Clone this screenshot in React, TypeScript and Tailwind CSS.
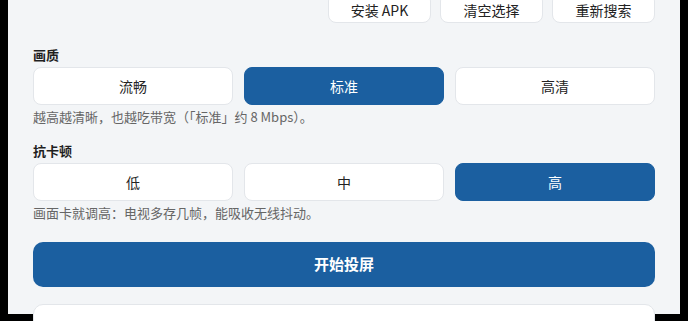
import React, { useState } from "react";

const font = { fontFamily: '"Noto Sans CJK SC", "Noto Sans", sans-serif' };

const Segmented = ({
  options,
  value,
  onChange,
}: {
  options: string[];
  value: string;
  onChange: (v: string) => void;
}) => (
  <div className="grid grid-cols-3 gap-[11px]">
    {options.map((o) => (
      <button
        key={o}
        onClick={() => onChange(o)}
        className={`h-[38px] rounded-[8px] text-[14px] ${
          value === o
            ? "bg-[#1b5fa0] text-white border border-[#1b5fa0]"
            : "bg-white text-[#222] border border-[#e3e6ea]"
        }`}
      >
        {o}
      </button>
    ))}
  </div>
);

export default function App() {
  const [quality, setQuality] = useState("标准");
  const [buffer, setBuffer] = useState("高");

  return (
    <div className="h-[321px] overflow-hidden bg-black px-2" style={font}>
      <div className="h-full bg-[#f3f5f7] px-[25px]">
        {/* 顶部操作 */}
        <div className="-mt-[7px] flex justify-end gap-[9px]">
          {["安装 APK", "清空选择", "重新搜索"].map((t) => (
            <button
              key={t}
              className="flex h-[30px] w-[103px] items-center justify-center rounded-[8px] border border-[#e3e6ea] bg-white pt-[3px] text-[14px] leading-[14px] text-[#222]"
            >
              {t}
            </button>
          ))}
        </div>

        <div className="mt-[23px]">
          <div className="mb-[3px] text-[13px] leading-[18px] font-bold text-[#1f1f1f]">画质</div>
          <Segmented options={["流畅", "标准", "高清"]} value={quality} onChange={setQuality} />
          <p className="mt-[3px] text-[13px] leading-[18px] text-[#666]">
            越高越清晰，也越吃带宽（「标准」约 8 Mbps）。
          </p>
        </div>

        <div className="mt-[16px]">
          <div className="mb-[3px] text-[13px] leading-[18px] font-bold text-[#1f1f1f]">抗卡顿</div>
          <Segmented options={["低", "中", "高"]} value={buffer} onChange={setBuffer} />
          <p className="mt-[3px] text-[13px] leading-[18px] text-[#666]">
            画面卡就调高：电视多存几帧，能吸收无线抖动。
          </p>
        </div>

        <button className="mt-[20px] h-[45px] w-full rounded-[10px] bg-[#1b5fa0] text-[15px] font-bold text-white">
          开始投屏
        </button>

        <div className="mt-[17px] h-[60px] rounded-[10px] border border-[#e3e6ea] bg-white" />
      </div>
    </div>
  );
}
